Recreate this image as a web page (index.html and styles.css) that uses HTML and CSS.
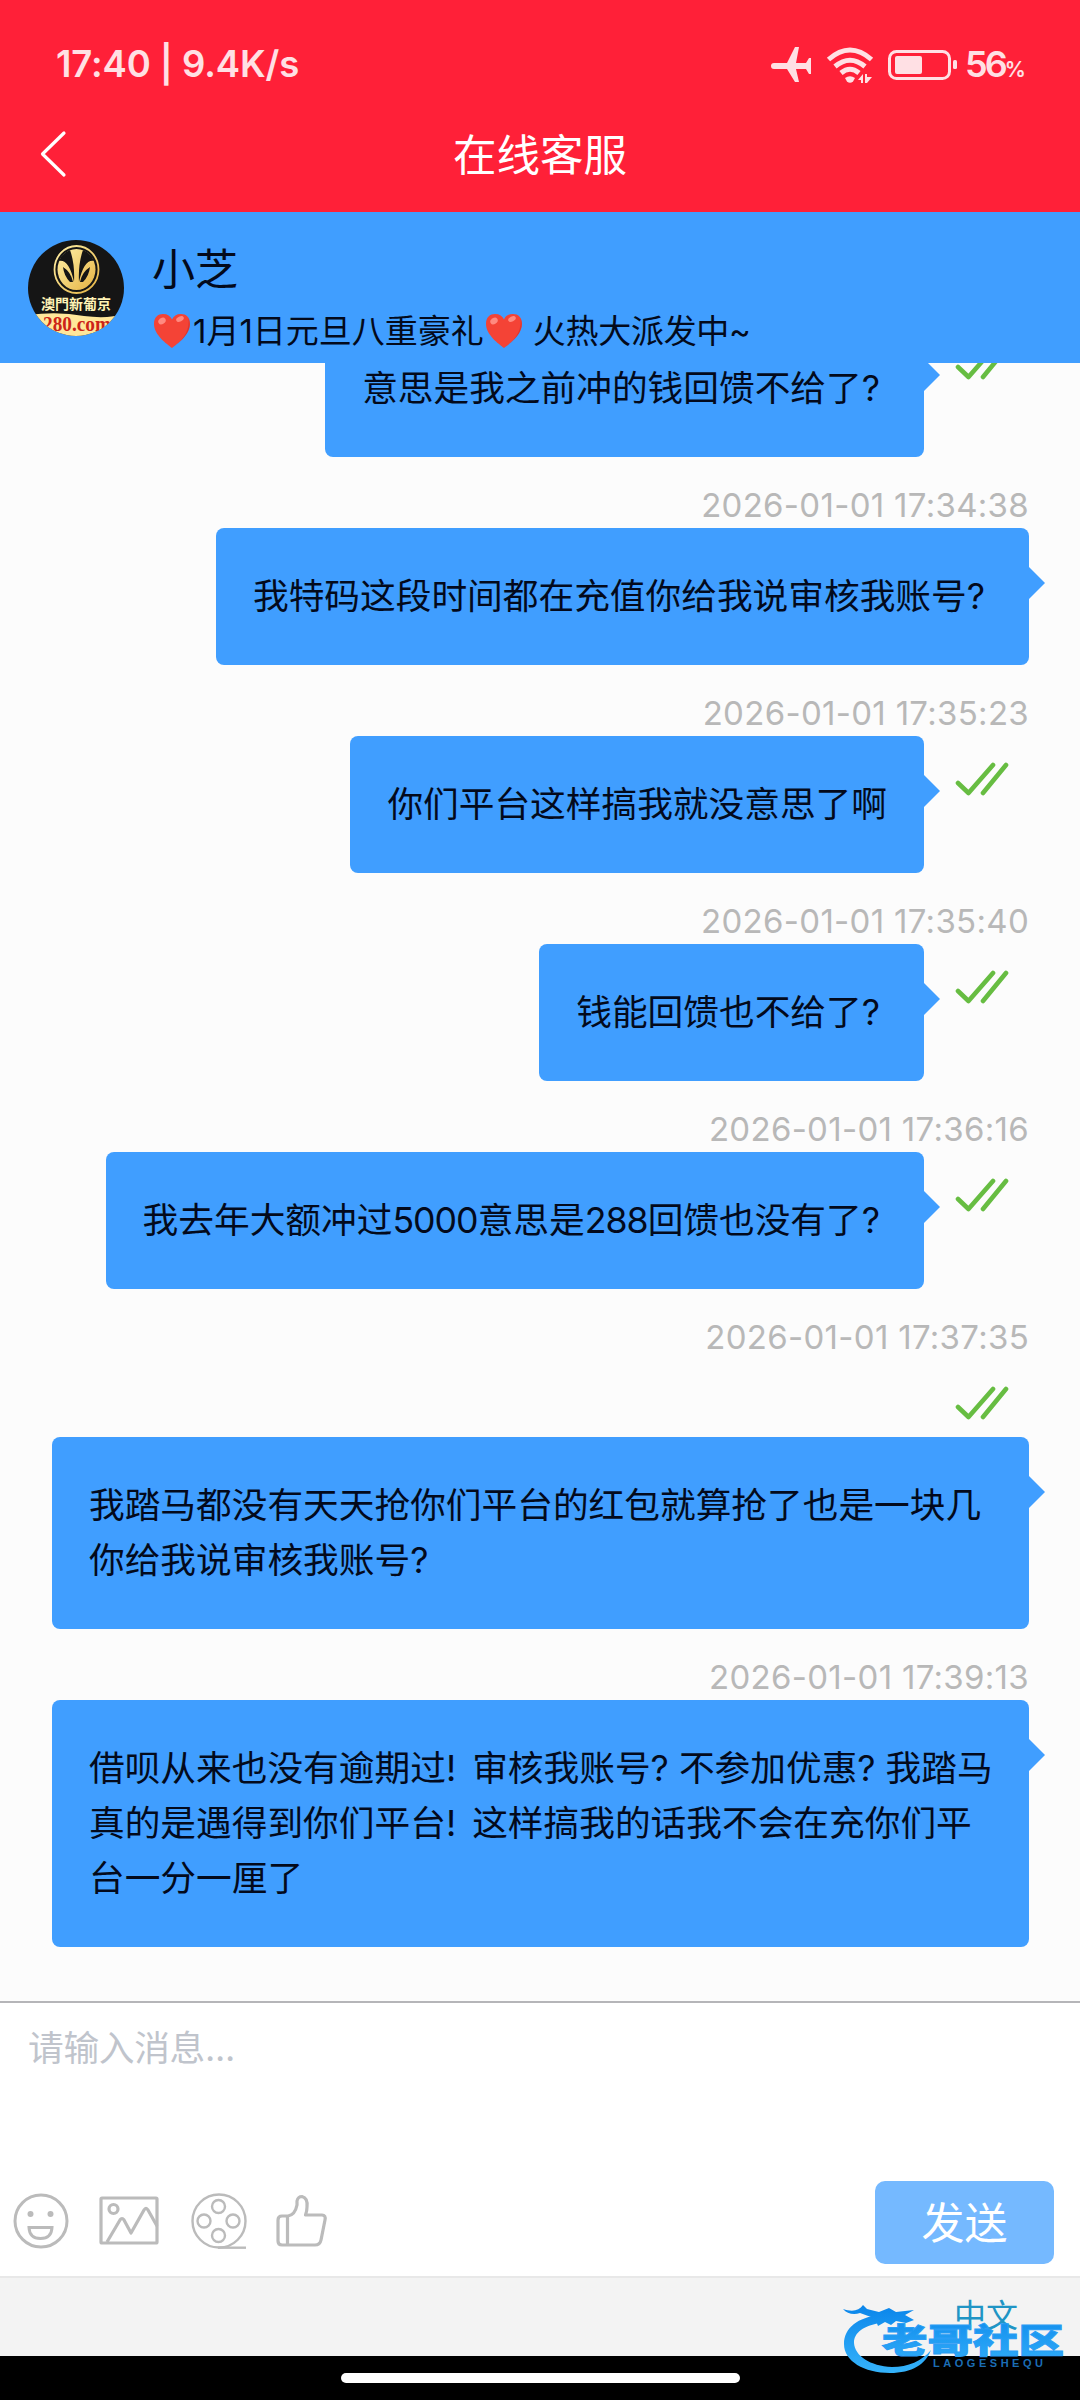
FILE: index.html
```html
<!DOCTYPE html>
<html lang="zh-CN">
<head>
  <meta charset="utf-8">
  <title>在线客服</title>
  <link rel="stylesheet" href="styles.css">
</head>
<body>
  <!-- shared check mark and heart -->
  <svg width="0" height="0" class="defs">
    <symbol id="check" viewBox="0 0 54 34">
      <path d="M3 21 L13.500 31 L38 3 M28 31 L51 3" fill="none" stroke="#67bd42" stroke-width="4.600" stroke-linecap="round" stroke-linejoin="round"/>
    </symbol>
    <symbol id="heart" viewBox="0 0 38 36">
      <path d="M19 35 C14 31 1 22 1 11 C1 4 5 1 10 1 C14.500 1 17.500 3 19 6.500 C20.500 3 23.500 1 28 1 C33 1 37 4 37 11 C37 22 24 31 19 35 Z" fill="#f44336"/>
      <path d="M19 35 C30 27 37 18 35.500 5 C39 14 35 24 19 35 Z" fill="#c62828" opacity=".5"/>
      <ellipse cx="9" cy="8" rx="4" ry="3" fill="#ff8a80" transform="rotate(-35 9 8)"/>
      <ellipse cx="27" cy="6" rx="4" ry="2.500" fill="#ff8a80" transform="rotate(-25 27 6)"/>
    </symbol>
  </svg>

  <div class="top">
    <div class="status">
      <span class="clock">17:40 | 9.4K/s</span>
      <svg class="status-icons" width="190" height="40" viewBox="0 0 190 40" fill="#ffe0e4">
        <path d="M4 19 H17 L25 3 H29 L26 19 H36 L39 14 H41 V30 H39 L36 25 H26 L29 38 H25 L17 25 H4 Q1 25 1 22 Q1 19 4 19 Z"/>
        <g fill="none" stroke="#ffe0e4" stroke-width="5">
          <path d="M58.500 15.500 Q80 -3.500 101.500 15.500"/>
          <path d="M65 22.500 Q80 10 95 22.500"/>
          <path d="M71 29 Q80 21.500 89 29"/>
        </g>
        <path d="M75 34 Q80 30.500 85 34 L83 37.500 Q80 40 77 37.500 Z"/>
        <path d="M88 36 L93 30 V39 H91 V36 Z M95 30 H97 V33 H102 L97 39 H95 Z"/>
        <rect x="119.500" y="7.500" width="60" height="27" rx="7" fill="none" stroke="#ffe0e4" stroke-width="3"/>
        <rect x="125" y="12" width="27" height="18" rx="2"/>
        <rect x="183" y="16" width="4" height="9" rx="1.500"/>
      </svg>
      <span class="percent">56<small>%</small></span>
    </div>
    <div class="nav">
      <svg class="back" width="30" height="48" viewBox="0 0 30 48">
        <path d="M26 3 L4.500 24 L26 45" fill="none" stroke="#fff" stroke-width="3.200" stroke-linecap="round" stroke-linejoin="round"/>
      </svg>
      <span class="nav-title">在线客服</span>
    </div>
  </div>

  <div class="agent">
    <svg class="avatar" width="96" height="96" viewBox="0 0 96 96">
      <defs>
        <clipPath id="round"><circle cx="48" cy="48" r="48"/></clipPath>
        <linearGradient id="gold" x1="0" y1="0" x2="1" y2="1">
          <stop offset="0" stop-color="#fff0a8"/>
          <stop offset="1" stop-color="#e5b342"/>
        </linearGradient>
      </defs>
      <g clip-path="url(#round)">
        <rect width="96" height="96" fill="#151515"/>
        <ellipse cx="48.500" cy="29.500" rx="22" ry="23.500" fill="none" stroke="url(#gold)" stroke-width="1.800"/>
        <ellipse cx="48.500" cy="29.500" rx="19" ry="20.500" fill="url(#gold)"/>
        <path d="M42 10 Q34 13 31 21 Q41 19 46 42 Q47 24 42 10 Z M55 10 Q63 13 66 21 Q56 19 51 42 Q50 24 55 10 Z" fill="#151515"/>
        <path d="M35 27 Q43 32 45 42 H42 Q36 36 35 27 Z M62 27 Q54 32 52 42 H55 Q61 36 62 27 Z" fill="#151515"/>
        <path d="M0 75 Q30 71 56 76 Q80 79 96 74 V96 H0 Z" fill="#ffe79a"/>
        <text x="13" y="69" class="avatar-cn" textLength="70">澳門新葡京</text>
        <text x="15" y="91" class="avatar-url" textLength="68" lengthAdjust="spacingAndGlyphs">280.com</text>
      </g>
    </svg>
    <div class="agent-info">
      <div class="agent-name">小芝</div>
      <div class="agent-note"><svg class="heart" width="38" height="36"><use href="#heart"/></svg><span>1月1日元旦八重豪礼</span><svg class="heart" width="38" height="36"><use href="#heart"/></svg><span class="note-end">火热大派发中~</span></div>
    </div>
  </div>

  <div class="chat">
    <div class="message">
      <div class="bubble ask">意思是我之前冲的钱回馈不给了?</div>
      <div class="read"><svg width="54" height="34"><use href="#check"/></svg></div>
    </div>
    <div class="time">2026-01-01 17:34:38</div>
    <div class="message">
      <div class="bubble ask">我特码这段时间都在充值你给我说审核我账号?</div>
    </div>
    <div class="time">2026-01-01 17:35:23</div>
    <div class="message">
      <div class="bubble">你们平台这样搞我就没意思了啊</div>
      <div class="read"><svg width="54" height="34"><use href="#check"/></svg></div>
    </div>
    <div class="time">2026-01-01 17:35:40</div>
    <div class="message">
      <div class="bubble ask">钱能回馈也不给了?</div>
      <div class="read"><svg width="54" height="34"><use href="#check"/></svg></div>
    </div>
    <div class="time">2026-01-01 17:36:16</div>
    <div class="message">
      <div class="bubble ask">我去年大额冲过<span class="num">5000</span>意思是<span class="num">288</span>回馈也没有了?</div>
      <div class="read"><svg width="54" height="34"><use href="#check"/></svg></div>
    </div>
    <div class="time">2026-01-01 17:37:35</div>
    <div class="message long">
      <div class="read"><svg width="54" height="34"><use href="#check"/></svg></div>
      <div class="bubble">我踏马都没有天天抢你们平台的红包就算抢了也是一块几<br>你给我说审核我账号?</div>
    </div>
    <div class="time">2026-01-01 17:39:13</div>
    <div class="message long">
      <div class="bubble">借呗从来也没有逾期过<span class="bang">!</span> 审核我账号? 不参加优惠? 我踏马<br>真的是遇得到你们平台<span class="bang">!</span> 这样搞我的话我不会在充你们平<br>台一分一厘了</div>
    </div>
  </div>

  <div class="editor">
    <div class="placeholder">请输入消息...</div>
    <div class="tools">
      <div class="tool-icons">
        <svg width="56" height="56" viewBox="0 0 56 56" fill="none" stroke="#bbb" stroke-width="3">
          <circle cx="28" cy="28" r="26"/>
          <circle cx="17.500" cy="21" r="3" fill="#bbb" stroke="none"/>
          <circle cx="37.500" cy="21" r="3" fill="#bbb" stroke="none"/>
          <path d="M16 34.500 H39 Q38.500 45.500 27.500 45.500 Q16.500 45.500 16 34.500 Z"/>
        </svg>
        <svg width="60" height="56" viewBox="0 0 60 56" fill="none" stroke="#bbb" stroke-width="3.200" stroke-linejoin="round">
          <rect x="2" y="5" width="56" height="45" rx="1"/>
          <circle cx="14.500" cy="16" r="4.500"/>
          <path d="M8 49 L21 27 Q23 24 25 27 L32 40 L45 17 Q47 13.500 49 17 L58 33"/>
        </svg>
        <svg width="58" height="56" viewBox="-2 0 58 56" fill="none" stroke="#bbb" stroke-width="2.400">
          <circle cx="28" cy="28" r="26.500"/>
          <circle cx="27.500" cy="13.500" r="6.500"/>
          <circle cx="13" cy="28" r="6.500"/>
          <circle cx="42" cy="28" r="6.500"/>
          <circle cx="27.500" cy="42.500" r="6.500"/>
          <path d="M27 54.700 H55"/>
        </svg>
        <svg class="thumb" width="54" height="56" viewBox="0 0 54 56" fill="none" stroke="#bbb" stroke-width="3.200" stroke-linejoin="round">
          <path d="M7 23 H13 Q20 22 22 12 V8 Q23 3.500 27 3.500 Q33 5 32 14 Q32 18 30.500 22 H47 Q51 22 50 27 L46 47 Q45 52 40 52 H7 Q3 52 3 48 V27 Q3 23 7 23 Z M12.500 23 V52"/>
        </svg>
      </div>
      <button class="send">发送</button>
    </div>
  </div>

  <div class="footer">
    <span class="lang">中文</span>
    <div class="homebar"><div class="pill"></div></div>
    <svg class="watermark" width="244" height="90" viewBox="0 0 244 90">
      <defs>
        <linearGradient id="sea" x1="0" y1="15" x2="0" y2="84" gradientUnits="userSpaceOnUse">
          <stop offset="0" stop-color="#0a85ea"/>
          <stop offset="1" stop-color="#36b4fb"/>
        </linearGradient>
      </defs>
      <g fill="url(#sea)">
        <path d="M44 25 C22 27 8 38 8 54 C8 71 28 83 54 83 C76 83 90 74 95 60 C86 71 72 77 56 77 C34 76 19 66 18 53 C18 42 28 36 44 33 Z"/>
        <path d="M7 19 C16 22 23 21 27 15 L31 19 L43 22 L53 18 L60 22 L78 20 L69 25 L78 30 L70 33 L60 31 L55 35 L49 32 L42 36 L40 31 L30 33 L35 27 L24 23 C18 25 11 24 7 19 Z"/>
        <text x="46" y="63" class="mark-cn" textLength="182" lengthAdjust="spacingAndGlyphs">老哥社区</text>
      </g>
      <text x="97" y="77" class="mark-en" textLength="110">LAOGESHEQU</text>
    </svg>
  </div>
</body>
</html>
```
FILE: styles.css
```css
body {
  margin: 0;
  width: 1080px;
  height: 2400px;
  display: flex;
  flex-direction: column;
  overflow: hidden;
  font-family: Inter, "Noto Sans CJK SC", sans-serif;
  background-color: #fcfcfc;
  color: #030a1c;
}

svg {
  display: block;
  flex: none;
}

.defs {
  position: absolute;
}

/* header */
.top {
  height: 212px;
  background-color: #ff2038;
  color: #fff;
}

.status {
  display: flex;
  align-items: center;
  height: 106px;
  padding: 21px 54px 0 56px;
  box-sizing: border-box;
  color: #ffe0e4;
}

.clock {
  flex: 1;
  font-size: 36.5px;
  font-weight: 600;
  letter-spacing: -0.1px;
}

.percent {
  width: 61px;
  margin-left: 5px;
  font-size: 36px;
  font-weight: 600;
  letter-spacing: -3px;
  white-space: nowrap;
}

.percent small {
  font-size: 21px;
}

.nav {
  display: flex;
  align-items: center;
  height: 96px;
  padding: 0 39px;
}

.back {
  margin-left: -1px;
}

.nav-title {
  flex: 1;
  margin-right: 29px;
  padding-bottom: 4px;
  text-align: center;
  font-size: 43.5px;
}

.agent {
  display: flex;
  height: 151px;
  padding: 28px 28px 0;
  box-sizing: border-box;
  background-color: #409eff;
}

.avatar-cn {
  font-family: "Noto Sans CJK TC", sans-serif;
  font-size: 14px;
  font-weight: bold;
  fill: #fff3b5;
}

.avatar-url {
  font-family: "Liberation Serif", serif;
  font-size: 21px;
  font-weight: bold;
  fill: #cc2418;
}

.agent-info {
  margin-left: 28px;
}

.agent-name {
  height: 60px;
  line-height: 59px;
  font-size: 43px;
}

.agent-note {
  display: flex;
  align-items: center;
  height: 62px;
  font-size: 33px;
  white-space: nowrap;
}

.agent-note span {
  padding-bottom: 5px;
}

.heart {
  margin: 0 2px 0 1px;
}

.note-end {
  margin-left: 8px;
  letter-spacing: -0.3px;
}

/* messages */
.chat {
  flex: 1;
  display: flex;
  flex-direction: column;
  justify-content: flex-end;
  padding: 0 51px 54px;
  overflow: hidden;
}

.time {
  flex: none;
  height: 45px;
  padding-top: 26px;
  line-height: 45px;
  text-align: right;
  font-size: 33px;
  letter-spacing: 0.3px;
  color: #b8b8b8;
}

.message {
  flex: none;
  display: flex;
  justify-content: flex-end;
}

.message.long {
  flex-direction: column;
  align-items: flex-end;
}

.bubble {
  position: relative;
  padding: 41px 37px;
  border-radius: 8px;
  background-color: #409eff;
  font-size: 35.7px;
  line-height: 55px;
  white-space: nowrap;
}

.bubble.ask {
  padding-right: 44px;
}

.num {
  letter-spacing: -1px;
}

.bang {
  margin-right: 6px;
}

.long .bubble {
  width: 903px;
}

.bubble::after {
  content: "";
  position: absolute;
  top: 39px;
  left: 100%;
  border: 16px solid transparent;
  border-left-color: #409eff;
  border-right: none;
}

.read {
  width: 105px;
  height: 77px;
}

.read svg {
  margin: 26px 0 0 31px;
}

/* input */
.editor {
  height: 277px;
  border-top: 2px solid #b5b5b8;
  border-bottom: 2px solid #e8e8e8;
  box-sizing: border-box;
  background-color: #fff;
}

.placeholder {
  height: 178px;
  padding: 18px 28px 0;
  box-sizing: border-box;
  line-height: 54px;
  font-size: 35.7px;
  letter-spacing: -0.3px;
  color: #c0c4cc;
}

.tools {
  display: flex;
  justify-content: space-between;
  padding: 0 26px 0 13px;
}

.tool-icons {
  display: flex;
  align-items: center;
  gap: 30px;
  padding-bottom: 4px;
}

.thumb {
  margin-left: -2px;
}

.send {
  width: 179px;
  height: 83px;
  padding: 0 0 6px;
  border: none;
  border-radius: 10px;
  background-color: #75b9ff;
  color: #fff;
  font-family: inherit;
  font-size: 43px;
}

.footer {
  position: relative;
  height: 122px;
  background-color: #f3f3f3;
}

.lang {
  display: block;
  height: 78px;
  margin-right: 62px;
  text-align: right;
  line-height: 75px;
  font-size: 32px;
  color: #2095c5;
}

.homebar {
  display: flex;
  align-items: center;
  justify-content: center;
  height: 44px;
  background-color: #000;
}

.pill {
  width: 399px;
  height: 10px;
  border-radius: 5px;
  background-color: #fff;
}

.watermark {
  position: absolute;
  right: 0;
  bottom: 20px;
}

.mark-cn {
  font-size: 34px;
  font-weight: 900;
  stroke: #2a9df5;
  stroke-width: 1px;
}

.mark-en {
  font-family: "Liberation Sans", sans-serif;
  font-size: 11px;
  font-weight: bold;
  fill: #1b6db5;
}
```
